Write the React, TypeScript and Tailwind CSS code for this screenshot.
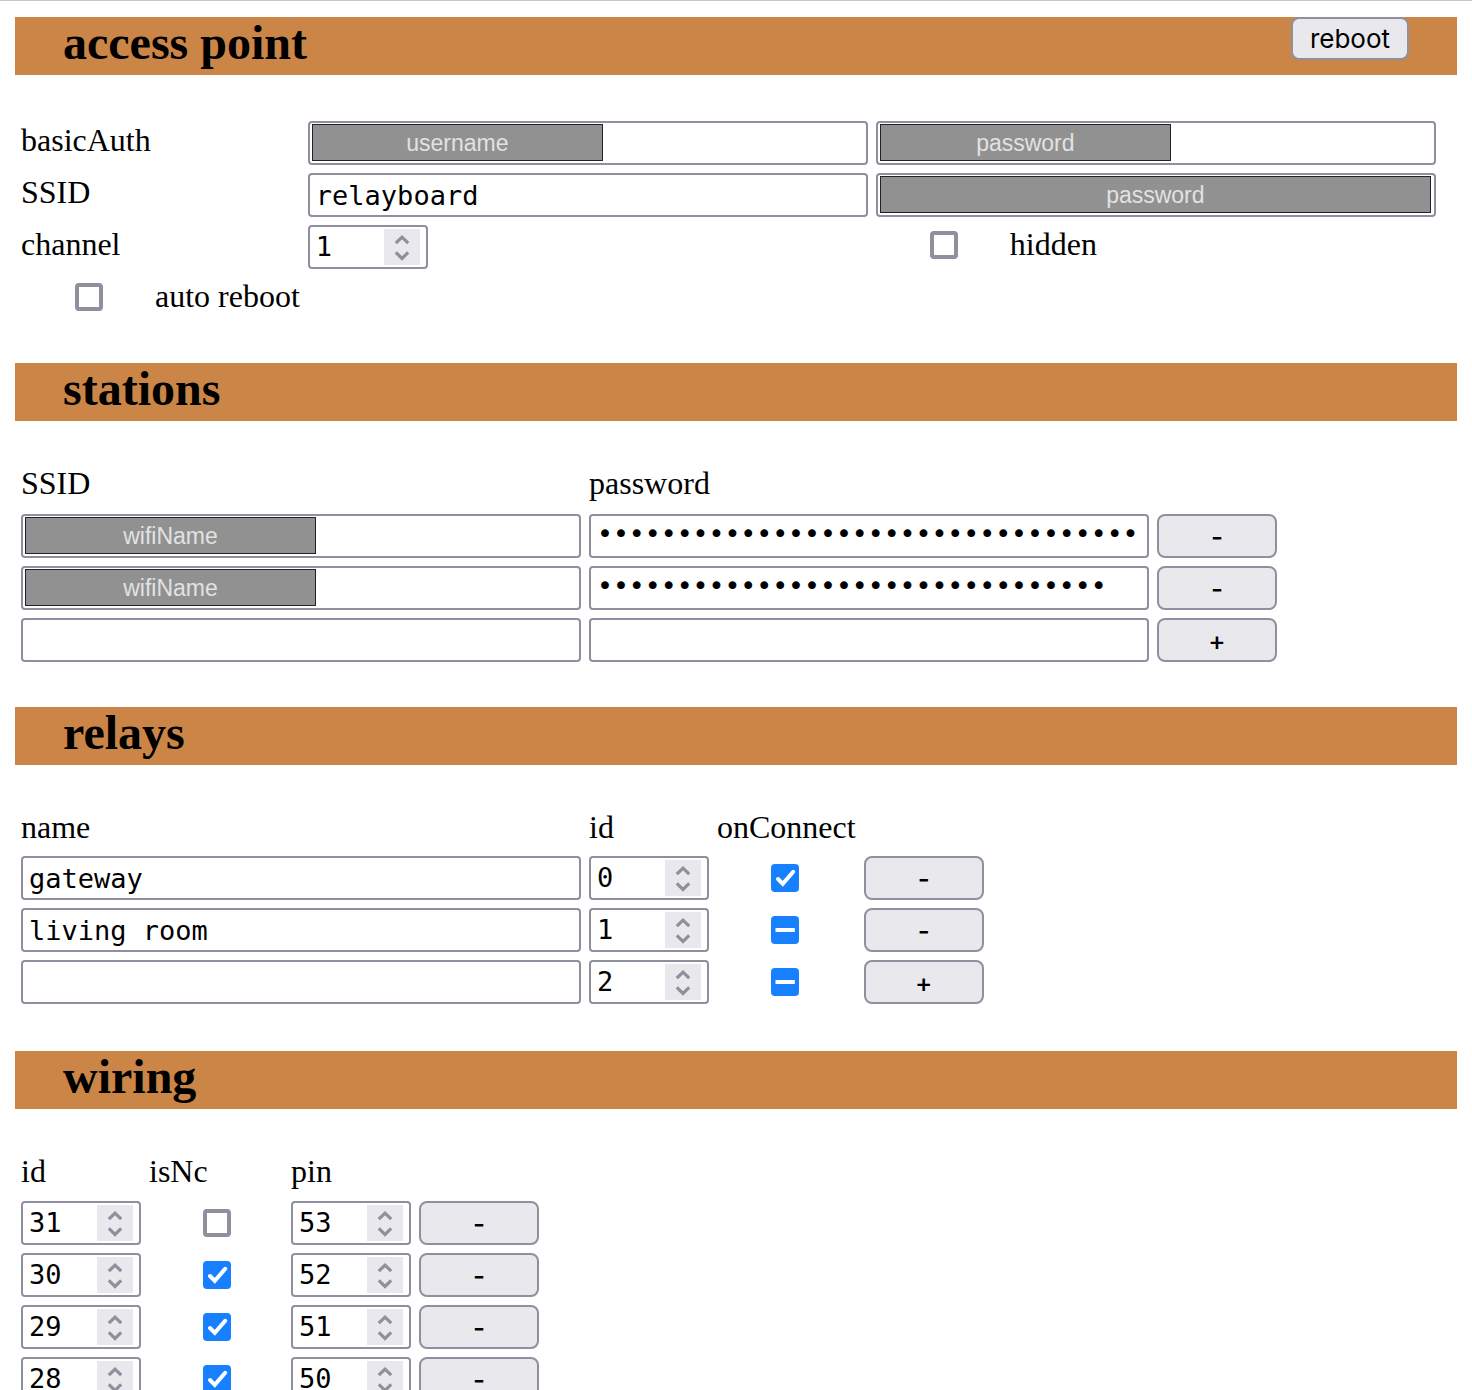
import { useEffect, useRef, type ReactNode } from "react";

const mono = "font-['DejaVu_Sans_Mono',monospace]";
const field =
  "block h-11 rounded-sm border-2 border-[#8f8f9d] bg-white text-[27px] text-black";

type SectionProps = { title: string; action?: ReactNode; className: string; children: ReactNode };

function Section({ title, action, className, children }: SectionProps) {
  return (
    <section className={className}>
      <header className="mb-10 flex h-[58px] items-start justify-between bg-[#cb8647] px-12">
        <h2 className="text-[48px] leading-[52px] font-bold">{title}</h2>
        {action}
      </header>
      {children}
    </section>
  );
}

function Table({ children }: { children: ReactNode }) {
  return (
    <table className="border-separate border-spacing-1 text-left text-[32px]">{children}</table>
  );
}

function Cell({ children }: { children?: ReactNode }) {
  return <td className="p-0.5 align-top">{children}</td>;
}

function RowHeader({ htmlFor, children }: { htmlFor: string; children: ReactNode }) {
  return (
    <th scope="row" className="p-0.5 align-top leading-[38px] font-normal">
      <label htmlFor={htmlFor}>{children}</label>
    </th>
  );
}

function HeaderRow({ names, className }: { names: string[]; className: string }) {
  return (
    <thead>
      <tr className={className}>
        {names.map((name) => (
          <th key={name} scope="col" className="p-0.5 align-top leading-[33px] font-normal">
            {name}
          </th>
        ))}
        <td />
      </tr>
    </thead>
  );
}

type TextFieldProps = { id?: string; label: string; value?: string; mask?: string; wide?: boolean };

function TextField({ id, label, value = "", mask, wide }: TextFieldProps) {
  return (
    <div className="relative w-[560px]">
      <input
        id={id}
        type="text"
        aria-label={label}
        defaultValue={value}
        className={`${field} ${mono} w-full px-1.5`}
      />
      {mask && (
        <span
          className={`absolute top-[3px] left-1 h-[37px] border border-[#222] bg-[#919191] text-center font-['Liberation_Sans',Arial,sans-serif] text-[23px] leading-9 text-[#e2e2e2] ${
            wide ? "w-[551px]" : "w-[291px]"
          }`}
        >
          {mask}
        </span>
      )}
    </div>
  );
}

function PasswordField({ label, length }: { label: string; length: number }) {
  return (
    <input
      type="password"
      aria-label={label}
      defaultValue={"x".repeat(length)}
      className={`${field} w-[560px] px-1.5 pb-1.5 font-['DejaVu_Sans',sans-serif]`}
    />
  );
}

function NumberField({ id, label, value }: { id?: string; label: string; value: number }) {
  return (
    <div className={`${field} flex w-[120px] items-center px-1.5`}>
      <input
        id={id}
        type="number"
        aria-label={label}
        defaultValue={value}
        className={`${mono} h-10 w-full min-w-0 [appearance:textfield] outline-none [&::-webkit-inner-spin-button]:appearance-none`}
      />
      <svg viewBox="0 0 36 36" className="size-9 shrink-0 bg-[#e9e9ed]" aria-hidden="true">
        <path
          d="M11.8 14.2 L18 8.2 L24.2 14.2 M11.8 23.4 L18 29.4 L24.2 23.4"
          fill="none"
          stroke="#8f8f9d"
          strokeWidth="3.2"
        />
      </svg>
    </div>
  );
}

type CheckState = "on" | "off" | "mixed";

function Checkbox({ id, label, state }: { id?: string; label?: string; state: CheckState }) {
  const ref = useRef<HTMLInputElement>(null);
  useEffect(() => {
    if (ref.current) ref.current.indeterminate = state === "mixed";
  }, [state]);
  return (
    <span className="relative block size-7">
      <input
        ref={ref}
        id={id}
        type="checkbox"
        aria-label={label}
        defaultChecked={state === "on"}
        className={`block size-7 appearance-none rounded-sm ${
          state === "off" ? "border-4 border-[#8f8f9d] bg-white" : "bg-[#1680ff]"
        }`}
      />
      {state !== "off" && (
        <svg viewBox="0 0 28 28" className="pointer-events-none absolute inset-0" aria-hidden="true">
          <path
            d={state === "on" ? "M7 15 L11.8 19.8 L22.2 7.8" : "M4.5 14 H23.8"}
            fill="none"
            stroke="#fff"
            strokeWidth="4"
            strokeLinecap={state === "on" ? "round" : "butt"}
          />
        </svg>
      )}
    </span>
  );
}

function CheckCell({ label, state }: { label: string; state: CheckState }) {
  return (
    <td className="p-0.5 align-middle">
      <div className="mr-[52px] ml-[54px]">
        <Checkbox label={label} state={state} />
      </div>
    </td>
  );
}

function LabelledCheckbox({ id, children }: { id: string; children: ReactNode }) {
  return (
    <div className="flex h-11 items-start gap-[52px] pl-[54px]">
      <div className="pt-1.5">
        <Checkbox id={id} state="off" />
      </div>
      <label htmlFor={id} className="leading-[38px] whitespace-nowrap">
        {children}
      </label>
    </div>
  );
}

function RowButton({ kind }: { kind: "-" | "+" }) {
  return (
    <button
      type="button"
      aria-label={kind === "-" ? "remove row" : "add row"}
      className="block h-11 w-[120px] rounded-lg border-2 border-[#8f8f9d] bg-[#e9e9ed] font-[Inter,sans-serif] text-[26px] font-medium"
    >
      {kind}
    </button>
  );
}

const stations = [
  { mask: "wifiName", length: 34 },
  { mask: "wifiName", length: 32 },
  { mask: undefined, length: 0 },
];

const relays: { name: string; state: CheckState }[] = [
  { name: "gateway", state: "on" },
  { name: "living room", state: "mixed" },
  { name: "", state: "mixed" },
];

const wiring = [
  { id: 31, isNc: false, pin: 53 },
  { id: 30, isNc: true, pin: 52 },
  { id: 29, isNc: true, pin: 51 },
  { id: 28, isNc: true, pin: 50 },
];

export default function App() {
  return (
    <main className="h-screen overflow-y-auto border-t border-[#c8c8c8] bg-white px-[15px] pt-4 font-['Liberation_Serif','Times_New_Roman',serif] text-black [scrollbar-width:none]">
      <Section
        title="access point"
        className="min-h-[346px]"
        action={
          <button
            type="button"
            className="h-[43px] rounded-lg border-2 border-[#8f8f9d] bg-[#e9e9ed] px-[17px] font-[Inter,sans-serif] text-[26px]"
          >
            reboot
          </button>
        }
      >
        <Table>
          <tbody>
            <tr>
              <RowHeader htmlFor="auth-user">basicAuth</RowHeader>
              <Cell>
                <TextField id="auth-user" label="username" mask="username" />
              </Cell>
              <Cell>
                <TextField label="password" mask="password" />
              </Cell>
            </tr>
            <tr>
              <RowHeader htmlFor="ap-ssid">SSID</RowHeader>
              <Cell>
                <TextField id="ap-ssid" label="SSID" value="relayboard" />
              </Cell>
              <Cell>
                <TextField label="SSID password" mask="password" wide />
              </Cell>
            </tr>
            <tr>
              <RowHeader htmlFor="channel">channel</RowHeader>
              <Cell>
                <NumberField id="channel" label="channel" value={1} />
              </Cell>
              <Cell>
                <LabelledCheckbox id="hidden">hidden</LabelledCheckbox>
              </Cell>
            </tr>
            <tr>
              <Cell>
                <LabelledCheckbox id="auto-reboot">auto reboot</LabelledCheckbox>
              </Cell>
            </tr>
          </tbody>
        </Table>
      </Section>

      <Section title="stations" className="min-h-[344px]">
        <Table>
          <HeaderRow names={["SSID", "password"]} className="h-[43px]" />
          <tbody>
            {stations.map((s, i) => (
              <tr key={i}>
                <Cell>
                  <TextField label="SSID" mask={s.mask} />
                </Cell>
                <Cell>
                  <PasswordField label="password" length={s.length} />
                </Cell>
                <Cell>
                  <RowButton kind={i < stations.length - 1 ? "-" : "+"} />
                </Cell>
              </tr>
            ))}
          </tbody>
        </Table>
      </Section>

      <Section title="relays" className="min-h-[344px]">
        <Table>
          <HeaderRow names={["name", "id", "onConnect"]} className="h-[41px]" />
          <tbody>
            {relays.map((r, i) => (
              <tr key={i}>
                <Cell>
                  <TextField label="name" value={r.name} />
                </Cell>
                <Cell>
                  <NumberField label="id" value={i} />
                </Cell>
                <CheckCell label="onConnect" state={r.state} />
                <Cell>
                  <RowButton kind={i < relays.length - 1 ? "-" : "+"} />
                </Cell>
              </tr>
            ))}
          </tbody>
        </Table>
      </Section>

      <Section title="wiring" className="min-h-[344px]">
        <Table>
          <HeaderRow names={["id", "isNc", "pin"]} className="h-[42px]" />
          <tbody>
            {wiring.map((w) => (
              <tr key={w.id}>
                <Cell>
                  <NumberField label="id" value={w.id} />
                </Cell>
                <CheckCell label="isNc" state={w.isNc ? "on" : "off"} />
                <Cell>
                  <NumberField label="pin" value={w.pin} />
                </Cell>
                <Cell>
                  <RowButton kind="-" />
                </Cell>
              </tr>
            ))}
          </tbody>
        </Table>
      </Section>
    </main>
  );
}
